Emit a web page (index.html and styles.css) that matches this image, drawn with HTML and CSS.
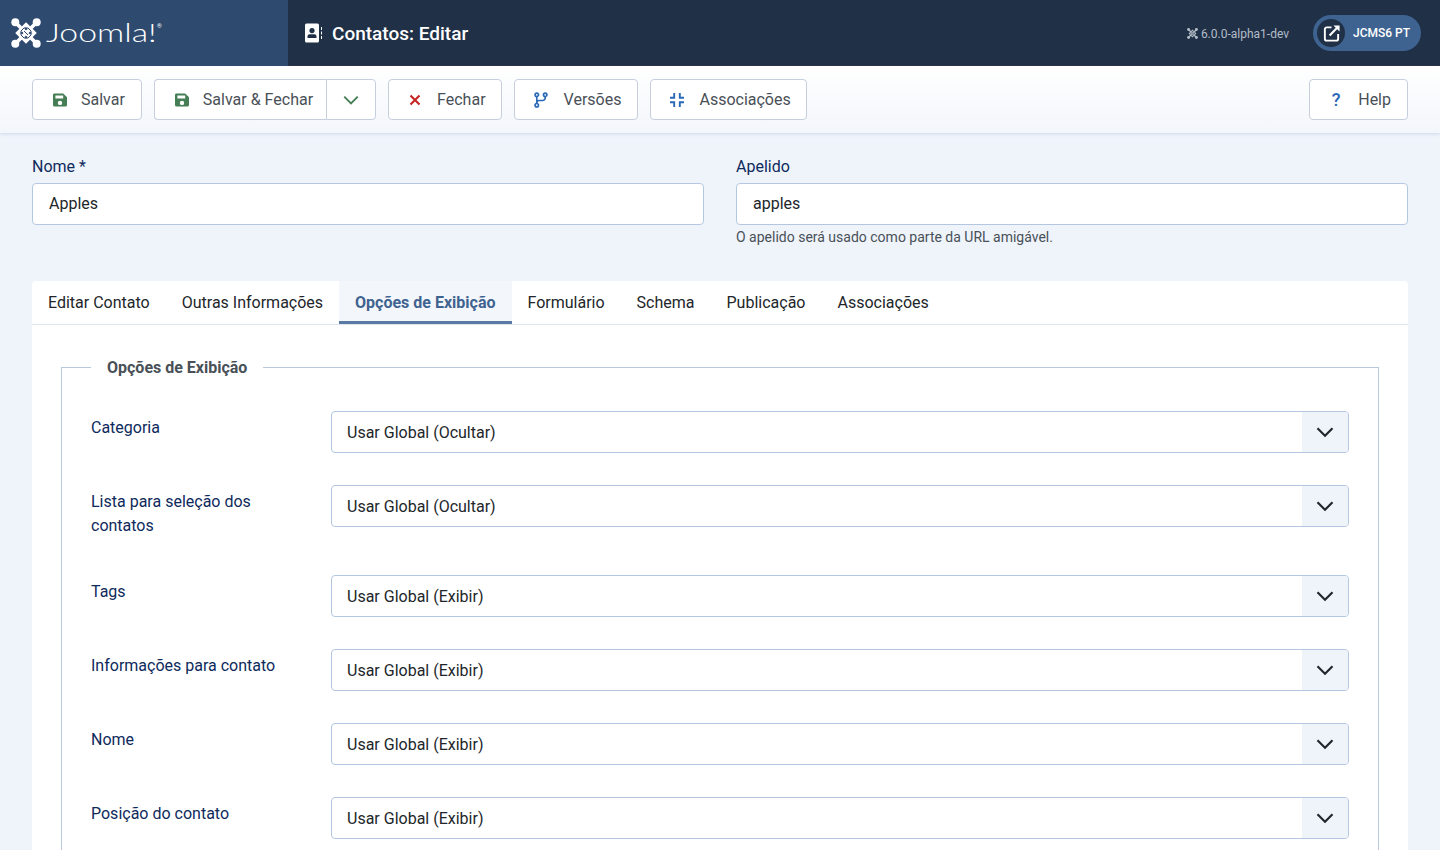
FILE: index.html
```html
<!DOCTYPE html>
<html lang="pt">

<head>
    <meta charset="UTF-8">
    <title>Contatos: Editar</title>
    <link rel="stylesheet" href="styles.css">
</head>

<body>

    <svg class="defs" width="0" height="0">
        <symbol id="joomla-mark" viewBox="0 0 30 30">
            <path class="mark-line" d="M4 4L26 26M26 4L4 26"/>
            <path class="mark-loop" d="M15 6.500L23.500 15L15 23.500L6.500 15z"/>
            <path class="mark-slit" d="M9.500 13.500L13.500 9.500M16.500 9.500L20.500 13.500M20.500 16.500L16.500 20.500M13.500 20.500L9.500 16.500M13 13L17 17"/>
            <circle class="mark-end" cx="4.300" cy="4.300" r="4"/>
            <circle class="mark-end" cx="25.700" cy="4.300" r="4"/>
            <circle class="mark-end" cx="4.300" cy="25.700" r="4"/>
            <circle class="mark-end" cx="25.700" cy="25.700" r="4"/>
        </symbol>
        <symbol id="icon-save" viewBox="-1 0 16 16">
            <path fill="currentColor" fill-rule="evenodd" d="M2 1.500h9.200L15 5.200V13a1.600 1.600 0 0 1-1.600 1.600H2.600A1.600 1.600 0 0 1 1 13V3a1.500 1.500 0 0 1 1-1.500zM3.400 3.500v3h7.800v-3zM8 8.700a2.200 2.200 0 1 0 0 4.400 2.200 2.200 0 0 0 0-4.400z"/>
        </symbol>
        <symbol id="icon-chevron" viewBox="0 0 16 16">
            <path fill="none" stroke="currentColor" stroke-width="1.700" d="M2 5l6 6 6-6"/>
        </symbol>
    </svg>

    <header class="topbar">
        <div class="brand">
            <svg class="brand-mark"><use href="#joomla-mark"/></svg>
            <span class="brand-name">Joomla!</span>
            <span class="brand-reg">®</span>
        </div>
        <div class="page-title">
            <svg class="page-title-icon" viewBox="0 0 20 20">
                <path fill="#fff" fill-rule="evenodd" d="M2.500 0.500h11A1.500 1.500 0 0 1 15 2v16a1.500 1.500 0 0 1-1.500 1.500h-11A1.500 1.500 0 0 1 1 18V2A1.500 1.500 0 0 1 2.500 0.500zM8 5a2.600 2.600 0 1 0 0 5.200 2.600 2.600 0 0 0 0-5.200zM3.500 15h9v-1.800a2 2 0 0 0-2-2h-5a2 2 0 0 0-2 2z"/>
                <path fill="#fff" d="M17 4h1v3h-1zM17 8.500h1v3h-1zM17 13h1v3h-1z"/>
            </svg>
            <h1>Contatos: Editar</h1>
        </div>
        <div class="topbar-right">
            <span class="version"><svg class="version-mark"><use href="#joomla-mark"/></svg>6.0.0-alpha1-dev</span>
            <a class="site-pill">
                <span class="site-pill-icon">
                    <svg viewBox="0 0 20 20" width="19" height="19">
                        <path fill="none" stroke="#fff" stroke-width="2" d="M10 3.500H5a2 2 0 0 0-2 2v10a2 2 0 0 0 2 2h10a2 2 0 0 0 2-2v-5"/>
                        <path fill="none" stroke="#fff" stroke-width="2.200" d="M8 12L17 3"/>
                        <path fill="#fff" d="M12 1.500h6.500V8z"/>
                    </svg>
                </span>
                JCMS6 PT
            </a>
        </div>
    </header>

    <div class="toolbar">
        <button class="btn"><svg class="btn-icon green"><use href="#icon-save"/></svg>Salvar</button>
        <div class="btn-group">
            <button class="btn"><svg class="btn-icon green"><use href="#icon-save"/></svg>Salvar &amp; Fechar</button>
            <button class="btn btn-caret"><svg class="caret-icon green"><use href="#icon-chevron"/></svg></button>
        </div>
        <button class="btn btn-close">
            <svg class="btn-icon red" viewBox="0 0 16 16"><path fill="none" stroke="currentColor" stroke-width="2.200" d="M3.500 3.500l9 9M12.500 3.500l-9 9"/></svg>Fechar
        </button>
        <button class="btn btn-versions">
            <svg class="btn-icon blue" viewBox="0 0 16 16">
                <g fill="none" stroke="currentColor" stroke-width="1.700">
                    <circle cx="3.800" cy="2.800" r="1.700"/>
                    <circle cx="12.200" cy="2.800" r="1.700"/>
                    <circle cx="3.800" cy="13.200" r="1.700"/>
                    <path d="M3.800 4.500v7M12.200 4.500v1.500a2.500 2.500 0 0 1-2.500 2.500H6.300a2.500 2.500 0 0 0-2.500 2"/>
                </g>
            </svg>Versões
        </button>
        <button class="btn btn-assoc">
            <svg class="btn-icon blue" viewBox="0 0 16 16"><path fill="none" stroke="currentColor" stroke-width="1.900" d="M1 5.800h4.200V1M10.800 1v4.800H15M15 10.200h-4.200V15M5.200 15v-4.800H1"/></svg>Associações
        </button>
        <button class="btn btn-help">
            <span class="btn-icon blue help-mark">?</span>Help
        </button>
    </div>

    <main class="content">
        <div class="title-row">
            <div class="field">
                <label class="field-label">Nome *</label>
                <input class="text-input" type="text" value="Apples">
            </div>
            <div class="field">
                <label class="field-label">Apelido</label>
                <input class="text-input" type="text" value="apples">
                <div class="field-hint">O apelido será usado como parte da URL amigável.</div>
            </div>
        </div>

        <section class="tabs-card">
            <nav class="tabs">
                <a class="tab">Editar Contato</a>
                <a class="tab">Outras Informações</a>
                <a class="tab tab-active">Opções de Exibição</a>
                <a class="tab">Formulário</a>
                <a class="tab">Schema</a>
                <a class="tab">Publicação</a>
                <a class="tab">Associações</a>
            </nav>

            <div class="tab-body">
                <fieldset class="options">
                    <legend>Opções de Exibição</legend>

                    <div class="form-row">
                        <label class="row-label">Categoria</label>
                        <div class="select-wrap">
                            <select class="select"><option>Usar Global (Ocultar)</option></select>
                            <span class="select-arrow"><svg class="select-chevron"><use href="#icon-chevron"/></svg></span>
                        </div>
                    </div>
                    <div class="form-row">
                        <label class="row-label">Lista para seleção dos contatos</label>
                        <div class="select-wrap">
                            <select class="select"><option>Usar Global (Ocultar)</option></select>
                            <span class="select-arrow"><svg class="select-chevron"><use href="#icon-chevron"/></svg></span>
                        </div>
                    </div>
                    <div class="form-row">
                        <label class="row-label">Tags</label>
                        <div class="select-wrap">
                            <select class="select"><option>Usar Global (Exibir)</option></select>
                            <span class="select-arrow"><svg class="select-chevron"><use href="#icon-chevron"/></svg></span>
                        </div>
                    </div>
                    <div class="form-row">
                        <label class="row-label">Informações para contato</label>
                        <div class="select-wrap">
                            <select class="select"><option>Usar Global (Exibir)</option></select>
                            <span class="select-arrow"><svg class="select-chevron"><use href="#icon-chevron"/></svg></span>
                        </div>
                    </div>
                    <div class="form-row">
                        <label class="row-label">Nome</label>
                        <div class="select-wrap">
                            <select class="select"><option>Usar Global (Exibir)</option></select>
                            <span class="select-arrow"><svg class="select-chevron"><use href="#icon-chevron"/></svg></span>
                        </div>
                    </div>
                    <div class="form-row">
                        <label class="row-label">Posição do contato</label>
                        <div class="select-wrap">
                            <select class="select"><option>Usar Global (Exibir)</option></select>
                            <span class="select-arrow"><svg class="select-chevron"><use href="#icon-chevron"/></svg></span>
                        </div>
                    </div>
                </fieldset>
            </div>
        </section>
    </main>

</body>

</html>
```

FILE: styles.css
```css
html,
body {
    height: 100%;
    overflow: hidden;
}

body {
    margin: 0;
    background-color: #eff4fb;
    color: #22262a;
    font-family: Roboto, "Liberation Sans", sans-serif;
    font-size: 16px;
    line-height: 24px;
}

.defs {
    display: block;
    height: 0;
}

/* Joomla mark, the slit colour follows whatever is behind it */

.mark-line {
    fill: none;
    stroke: var(--mark-color);
    stroke-width: 3.600;
}

.mark-loop {
    fill: none;
    stroke: var(--mark-color);
    stroke-width: 3.200;
}

.mark-slit {
    fill: none;
    stroke: var(--mark-bg);
    stroke-width: 1;
}

.mark-end {
    fill: var(--mark-color);
}

/* Top bar */

.topbar {
    display: flex;
    align-items: center;
    height: 66px;
    background-color: #1f3047;
    color: #fff;
}

.brand {
    --mark-bg: #2e4a6f;
    --mark-color: #fff;
    display: flex;
    align-items: center;
    width: 288px;
    height: 100%;
    padding-left: 11px;
    box-sizing: border-box;
    background-color: #2e4a6f;
}

.brand-mark {
    width: 30px;
    height: 30px;
}

.brand-name {
    display: inline-block;
    width: 108px;
    margin-left: 5px;
    padding-bottom: 2px;
    font-family: Lato, sans-serif;
    font-size: 26px;
    font-weight: 300;
    line-height: 30px;
    transform: scaleX(1.3);
    transform-origin: left center;
}

.brand-reg {
    align-self: flex-start;
    margin-top: 22px;
    margin-left: 3px;
    font-size: 6px;
    line-height: 8px;
}

.page-title {
    display: flex;
    align-items: center;
    gap: 8px;
    padding-left: 16px;
}

.page-title-icon {
    width: 20px;
    height: 20px;
}

.page-title h1 {
    margin: 1px 0 0;
    font-size: 19px;
    font-weight: 500;
}

.topbar-right {
    display: flex;
    align-items: center;
    margin-left: auto;
    padding-right: 19px;
}

.version {
    --mark-bg: #1f3047;
    --mark-color: #b4bcc7;
    display: flex;
    align-items: center;
    gap: 3px;
    margin-right: 24px;
    padding-top: 1px;
    color: #b4bcc7;
    font-size: 12px;
}

.version-mark {
    width: 11px;
    height: 11px;
}

.site-pill {
    display: flex;
    align-items: center;
    width: 108px;
    height: 36px;
    padding: 0 0 0 4px;
    box-sizing: border-box;
    border-radius: 18px;
    background-color: #3f6390;
    font-size: 12px;
    font-weight: 500;
    white-space: nowrap;
}

.site-pill-icon {
    display: flex;
    align-items: center;
    justify-content: center;
    width: 28px;
    height: 28px;
    margin-right: 8px;
    border-radius: 50%;
    background-color: #1f3047;
}

/* Toolbar */

.toolbar {
    display: flex;
    align-items: center;
    gap: 12px;
    height: 67px;
    padding: 0 32px;
    background: linear-gradient(#fff, #f3f6fb);
    box-shadow: 0 1px 3px rgba(120, 140, 175, 0.25);
}

.btn {
    display: flex;
    align-items: center;
    height: 41px;
    padding: 0 16px;
    border: 1px solid #c5cfdd;
    border-radius: 4px;
    background-color: #fff;
    color: #495057;
    font-family: inherit;
    font-size: 16px;
}

.btn-icon {
    width: 16px;
    height: 16px;
    margin: 0 14px 0 2px;
    flex-shrink: 0;
}

.btn-group {
    display: flex;
}

.btn-group .btn:first-child {
    border-radius: 4px 0 0 4px;
    border-right: 0;
    padding-right: 13px;
}

.btn-caret {
    width: 50px;
    justify-content: center;
    padding: 0;
    border-radius: 0 4px 4px 0;
}

.caret-icon {
    width: 18px;
    height: 18px;
}

.btn-close {
    padding-right: 15px;
}

.btn-versions .btn-icon {
    margin-right: 15px;
}

.btn-assoc {
    padding-right: 15px;
}

.btn-help {
    margin-left: auto;
}

.help-mark {
    font-size: 18px;
    font-weight: 500;
    line-height: 16px;
    text-align: center;
}

.green {
    color: #457d54;
}

.red {
    color: #c52827;
}

.blue {
    color: #2a69b8;
}

/* Form */

.content {
    padding: 22px 32px 0;
}

.title-row {
    display: grid;
    grid-template-columns: 1fr 1fr;
    gap: 32px;
    height: 126px;
}

.field-label {
    display: block;
    margin-bottom: 4px;
    color: #0e2a5c;
}

.text-input {
    display: block;
    width: 100%;
    height: 42px;
    padding: 0 16px 2px;
    box-sizing: border-box;
    border: 1px solid #b5c7e0;
    border-radius: 4px;
    background-color: #fff;
    color: #22262a;
    font-family: inherit;
    font-size: 16px;
}

.field-hint {
    margin-top: 2px;
    color: #495057;
    font-size: 14px;
    line-height: 21px;
}

/* Tabs */

.tabs-card {
    border-radius: 4px 4px 0 0;
    background-color: #fff;
}

.tabs {
    display: flex;
    border-bottom: 1px solid #dfe6f0;
}

.tab {
    height: 43px;
    padding: 10px 16px 0;
    box-sizing: border-box;
    border-bottom: 3px solid transparent;
    color: #22262a;
    line-height: 24px;
    white-space: nowrap;
}

.tab-active {
    padding-right: 17px;
    margin-right: -1px;
    background-color: #f3f6fa;
    border-bottom-color: #5a7aa5;
    color: #3f6390;
    font-weight: 700;
}

.tab-body {
    padding: 29px 29px 0;
}

.options {
    margin: 0;
    padding: 31px 29px 0;
    border: 1px solid #b9c8dd;
}

.options legend {
    padding: 2px 16px 0;
    color: #495057;
    font-weight: 700;
}

.form-row {
    display: flex;
    align-items: flex-start;
    margin-bottom: 32px;
}

.row-label {
    width: 240px;
    flex-shrink: 0;
    padding: 5px 32px 5px 0;
    box-sizing: border-box;
    color: #0e2a5c;
}

.select-wrap {
    position: relative;
    flex-grow: 1;
}

.select {
    display: block;
    width: 100%;
    height: 42px;
    padding: 0 46px 0 15px;
    box-sizing: border-box;
    border: 1px solid #b5c7e0;
    border-radius: 4px;
    background-color: #fff;
    color: #22262a;
    font-family: inherit;
    font-size: 16px;
    appearance: none;
}

.select-arrow {
    position: absolute;
    top: 1px;
    right: 1px;
    bottom: 1px;
    display: flex;
    align-items: center;
    justify-content: center;
    width: 46px;
    border-radius: 0 3px 3px 0;
    background-color: #eff4fb;
    pointer-events: none;
}

.select-chevron {
    width: 20px;
    height: 20px;
    color: #22262a;
}
```
